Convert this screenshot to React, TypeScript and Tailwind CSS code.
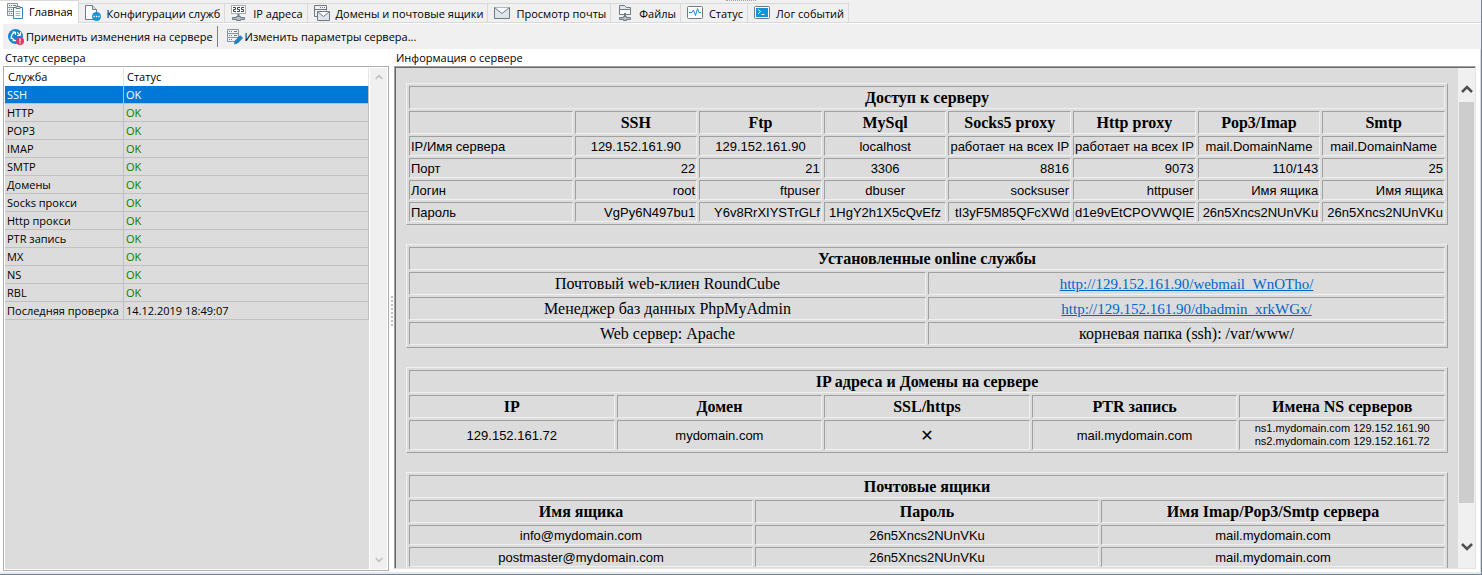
import type { ReactNode } from 'react'
import clsx from 'clsx'

const services = ['SSH', 'HTTP', 'POP3', 'IMAP', 'SMTP', 'Домены', 'Socks прокси', 'Http прокси', 'PTR запись', 'MX', 'NS', 'RBL']

const accessHeads = ['', 'SSH', 'Ftp', 'MySql', 'Socks5 proxy', 'Http proxy', 'Pop3/Imap', 'Smtp']

const accessRows = [
  ['IP/Имя сервера', '129.152.161.90', '129.152.161.90', 'localhost', 'работает на всех IP', 'работает на всех IP', 'mail.DomainName', 'mail.DomainName'],
  ['Порт', '22', '21', '3306', '8816', '9073', '110/143', '25'],
  ['Логин', 'root', 'ftpuser', 'dbuser', 'socksuser', 'httpuser', 'Имя ящика', 'Имя ящика'],
  ['Пароль', 'VgPy6N497bu1', 'Y6v8RrXIYSTrGLf', '1HgY2h1X5cQvEfz', 'tI3yF5M85QFcXWd', 'd1e9vEtCPOVWQIE', '26n5Xncs2NUnVKu', '26n5Xncs2NUnVKu'],
]

const mailboxes = [
  ['info@mydomain.com', '26n5Xncs2NUnVKu', 'mail.mydomain.com'],
  ['postmaster@mydomain.com', '26n5Xncs2NUnVKu', 'mail.mydomain.com'],
]

function Icon({ children }: { children: ReactNode }) {
  return (
    <svg className="w-4 h-4 shrink-0" viewBox="0 0 16 16" fill="none" stroke="#6f7b86" aria-hidden="true">
      {children}
    </svg>
  )
}

const HomeIcon = () => (
  <Icon>
    <path d="M.5.5h10v12H.5zM.5 4.5h10M.5 8.5h6" fill="#eef0f2" stroke="#8a949c" />
    <path d="M2 2.5h1M4 2.5h1M6 2.5h3M2 6.5h1M4 6.5h1M2 10.5h1M4 10.5h1" />
    <path d="M6.5 4.5h9v11h-9z" fill="#fff" stroke="#2b87b8" />
    <path d="M9 3.5h4v2H9z" fill="#dfe5ea" />
    <path d="M8.5 8.5h5M8.5 10.5h5M8.5 12.5h5" stroke="#a9b4bc" />
  </Icon>
)

const ConfigIcon = () => (
  <Icon>
    <path d="M.5.5h7l4 4v10H.5z" fill="#fff" />
    <path d="M7.5.5v4h4" fill="#dfe5ea" />
    <circle cx="11.5" cy="11.5" r="4.5" fill="#1492d8" stroke="none" />
    <path d="M8.5 11.5h1.3M10.9 11.5h1.3M13.3 11.5h1.3" stroke="#fff" strokeWidth="1.3" />
  </Icon>
)

const IpIcon = () => (
  <Icon>
    <path d="M.5.5h14v8H.5z" fill="#fff" stroke="#a3acb3" />
    <path d="M2 2.5h2.5v2h-2v2H5M9 2.5H6.5v2h2v2H6M13 2.5h-2.5v2h2v2H10" stroke="#3c454c" />
    <path d="M7.5 9v2" strokeWidth="2" />
    <path d="M5.5 11.5h4v1h4v2h-4v1h-4v-1h-4v-2h4z" fill="#b8c0c6" />
  </Icon>
)

const DomainIcon = () => (
  <Icon>
    <path d="M3 11.5H.5V.5h12v5M.5 4.5h12" />
    <path d="M6 2.5h1M8 2.5h1M10 2.5h1" />
    <path d="M3.5 6.5h12v9h-12z" fill="#dfe5ea" />
    <path d="m4 7 5.5 4.5L15 7" fill="#fff" />
  </Icon>
)

const MailIcon = () => (
  <Icon>
    <path d="M.5 2.5h15v11H.5z" fill="#dfe5ea" />
    <path d="m.5 2.5 7.5 6 7.5-6" fill="#f7f9fa" />
  </Icon>
)

const FilesIcon = () => (
  <Icon>
    <path d="M2.5.5h5l2 2h4v7h-11z" fill="#dfe5ea" />
    <path d="M2.5 4.5h11v5h-11z" fill="#fff" />
    <path d="M8 8v4" strokeWidth="2" />
    <path d="M6.5 11.5h3v1h4v2h-4v1h-3v-1h-4v-2h4z" fill="#b8c0c6" />
  </Icon>
)

const StatusIcon = () => (
  <Icon>
    <rect x=".5" y="1.5" width="15" height="12" rx="1" fill="#fff" />
    <path d="M2 7.5h3L6.5 5l2 5.5 2-7 1.5 4h2" stroke="#1492d8" />
  </Icon>
)

const LogIcon = () => (
  <Icon>
    <rect x=".5" y="1.5" width="15" height="12" rx="1" fill="#fff" />
    <path d="M2 3h12v9H2z" fill="#1492d8" stroke="none" />
    <path d="m4 4.5 2.5 2L4 9M7.5 9.5h3" stroke="#fff" />
  </Icon>
)

const ApplyIcon = () => (
  <Icon>
    <circle cx="7.5" cy="7.5" r="7.5" fill="#1687cf" stroke="none" />
    <path d="M3.8 9.5A4.2 4.2 0 0 1 7 3.5M8.5 11.5A4.2 4.2 0 0 1 5 10.5M9 3.5a4.2 4.2 0 0 1 2.5 2.5" stroke="#fff" strokeWidth="1.3" />
    <path d="M4.5 3h3v3M2.5 9.5h2.7v3M12.5 3v3.5H9" stroke="#fff" />
    <circle cx="12" cy="12" r="4" fill="#d93a68" stroke="none" />
    <path d="M12 9.5v3M12 13.3v1.2" stroke="#fff" strokeWidth="1.2" />
  </Icon>
)

const EditIcon = () => (
  <Icon>
    <path d="M.5.5h11v12H.5zM.5 4.5h11M.5 8.5h11" fill="#eef0f2" stroke="#8a949c" />
    <path d="M2 2.5h1M4 2.5h1M7 2.5h3M2 6.5h1M4 6.5h1M7 6.5h3M2 10.5h1M4 10.5h1" />
    <path d="m7.5 15 .8-3.3 5-5 2.3 2.3-5 5z" fill="#1687cf" stroke="#1c6fa8" strokeWidth=".8" />
  </Icon>
)

const tabs = [
  { label: 'Главная', icon: <HomeIcon /> },
  { label: 'Конфигурации служб', icon: <ConfigIcon /> },
  { label: 'IP адреса', icon: <IpIcon /> },
  { label: 'Домены и почтовые ящики', icon: <DomainIcon /> },
  { label: 'Просмотр почты', icon: <MailIcon /> },
  { label: 'Файлы', icon: <FilesIcon /> },
  { label: 'Статус', icon: <StatusIcon /> },
  { label: 'Лог событий', icon: <LogIcon /> },
]

function Arrow({ up = false, className }: { up?: boolean; className: string }) {
  return (
    <svg className={className} viewBox="0 0 12 8" fill="none" stroke="currentColor" strokeWidth="2.5" aria-hidden="true">
      <path d={up ? 'm1 7 5-5 5 5' : 'm1 1 5 5 5-5'} />
    </svg>
  )
}

// Cells and frames use the classic bevel of border="1" tables
function InfoTable({ cols, children }: { cols: string[]; children: ReactNode }) {
  return (
    <table className="w-full table-fixed border-separate border-spacing-[2px] border border-t-[#f0f0f0] border-l-[#f0f0f0] border-b-[#a0a0a0] border-r-[#a0a0a0]">
      <colgroup>
        {cols.map((c, i) => (
          <col key={i} className={c} />
        ))}
      </colgroup>
      <tbody>{children}</tbody>
    </table>
  )
}

const cell = 'border border-t-[#a0a0a0] border-l-[#a0a0a0] border-b-[#f0f0f0] border-r-[#f0f0f0] px-px whitespace-nowrap'
const serif = 'font-["Liberation_Serif",serif] text-[16px] leading-[19px] py-px'
const sans = 'font-["Liberation_Sans",sans-serif] text-[13px] leading-4 pt-[2px] pb-0'
const link = 'text-[15px] leading-none text-[#0066cc] underline'

function Title({ span, children }: { span: number; children: ReactNode }) {
  return (
    <tr>
      <th colSpan={span} className={clsx(cell, serif)}>{children}</th>
    </tr>
  )
}

function Heads({ items }: { items: string[] }) {
  return (
    <tr>
      {items.map((h, i) => (
        <th key={i} className={clsx(cell, serif)}>{h || '\u00a0'}</th>
      ))}
    </tr>
  )
}

export default function App() {
  return (
    <div className='h-screen flex flex-col overflow-hidden bg-white text-black font-["Open_Sans","Noto_Sans",sans-serif] text-[11px] leading-4 border-r border-b border-[#6f8196]'>
      {/* Tabs */}
      <div className="relative flex h-[23px] shrink-0 items-end bg-[#f0f0f0] border-b border-[#d9d9d9]">
        <div className="absolute top-0 left-1/2 -translate-x-1/2 w-[30px] border-t border-dotted border-[#a0a0a0]" />
        {tabs.map((tab, i) => (
          <button
            key={tab.label}
            className={clsx(
              'flex items-center gap-[6px] whitespace-nowrap border-t border-r border-[#d9d9d9]',
              i === 0 ? 'h-[23px] -mb-px bg-white pl-[7px] pr-[5px] pb-[2px]' : 'h-[19px] pl-[6px] pr-1',
            )}
          >
            {tab.icon}
            <span className="pt-px">{tab.label}</span>
          </button>
        ))}
      </div>

      {/* Toolbar */}
      <div className="flex h-[25px] mt-px ml-[3px] shrink-0 items-center bg-[#f0f0f0]">
        <button className="flex items-center gap-[2px] pl-[5px] pr-1">
          <ApplyIcon />
          Применить изменения на сервере
        </button>
        <div className="w-px h-[21px] bg-[#808080]" />
        <button className="flex items-center gap-[2px] pl-[9px]">
          <EditIcon />
          Изменить параметры сервера...
        </button>
      </div>

      <div className="flex flex-1 min-h-0 pl-[3px] pr-1 border-r border-[#d9d9d9]">
        {/* Service status */}
        <section className="flex flex-col w-[386px] shrink-0 pb-px">
          <h2 className="h-[17px] pl-[2px] leading-[18px]">Статус сервера</h2>
          <div className="flex flex-1 min-h-0 border border-[#abadb3] p-px">
            <div className="flex-1 bg-[#dcdcdc]">
              <table className="w-full table-fixed border-separate border-spacing-0">
                <colgroup>
                  <col className="w-[119px]" />
                  <col />
                </colgroup>
                <thead className="bg-white">
                  <tr className="h-[18px] text-left">
                    <th className="p-0 pl-[3px] font-normal border-r border-[#e5e5e5]">Служба</th>
                    <th className="p-0 pl-[3px] font-normal border-r border-[#e5e5e5]">Статус</th>
                  </tr>
                </thead>
                <tbody>
                  {services.map((name, i) => (
                    <tr key={name} className={clsx('h-[18px]', i === 0 && 'bg-[#0078d7] text-white')}>
                      <td className="p-0 pl-[2px] border-r border-b border-[#c0c0c0]">{name}</td>
                      <td className={clsx('p-0 pl-[2px] border-r border-b border-[#c0c0c0]', i > 0 && 'text-[#008000]')}>OK</td>
                    </tr>
                  ))}
                  <tr className="h-[18px]">
                    <td className="p-0 pl-[2px] whitespace-nowrap border-r border-b border-[#c0c0c0]">Последняя проверка</td>
                    <td className="p-0 pl-[2px] border-r border-b border-[#c0c0c0]">14.12.2019 18:49:07</td>
                  </tr>
                </tbody>
              </table>
            </div>
            <div className="flex flex-col w-[18px] justify-between items-center border-l border-white bg-[#f0f0f0] text-[#c0c0c0] py-[6px]">
              <button className="block" aria-label="Вверх"><Arrow up className="w-2 h-[6px]" /></button>
              <button className="block" aria-label="Вниз"><Arrow className="w-2 h-[6px]" /></button>
            </div>
          </div>
        </section>

        {/* Splitter */}
        <div className="flex w-[5px] shrink-0 items-center justify-center">
          <div className="h-[30px] border-l-2 border-dotted border-[#c0c0c0]" />
        </div>

        {/* Server info */}
        <section className="flex flex-col flex-1 min-w-0 pb-[3px]">
          <h2 className="h-[17px] pl-[2px] leading-[18px]">Информация о сервере</h2>
          <div className="flex flex-1 min-h-0 border border-t-[#a0a0a0] border-l-[#a0a0a0] border-b-[#e3e3e3] border-r-[#e3e3e3]">
            <div className="flex flex-1 min-w-0 border-t border-l border-[#696969]">
              <div className="flex flex-col flex-1 min-w-0 gap-[19px] overflow-hidden bg-[#dcdcdc] px-[10px] pt-[15px]">
                <InfoTable cols={['w-[16%]', 'w-[12%]', 'w-[12%]', 'w-[12%]', 'w-[12%]', 'w-[12%]', 'w-[12%]', 'w-[12%]']}>
                  <Title span={8}>Доступ к серверу</Title>
                  <Heads items={accessHeads} />
                  {accessRows.map((row, r) => (
                    <tr key={row[0]}>
                      {row.map((value, c) => (
                        <td
                          key={c}
                          className={clsx(cell, sans, c === 0 ? 'text-left' : r === 0 || c === 3 ? 'text-center' : 'text-right')}
                        >
                          {value}
                        </td>
                      ))}
                    </tr>
                  ))}
                </InfoTable>

                <InfoTable cols={['w-1/2', 'w-1/2']}>
                  <Title span={2}>Установленные online службы</Title>
                  <tr className="text-center">
                    <td className={clsx(cell, serif)}>Почтовый web-клиен RoundCube</td>
                    <td className={clsx(cell, serif)}>
                      <a href="#webmail" className={link}>http://129.152.161.90/webmail_WnOTho/</a>
                    </td>
                  </tr>
                  <tr className="text-center">
                    <td className={clsx(cell, serif)}>Менеджер баз данных PhpMyAdmin</td>
                    <td className={clsx(cell, serif)}>
                      <a href="#dbadmin" className={link}>http://129.152.161.90/dbadmin_xrkWGx/</a>
                    </td>
                  </tr>
                  <tr className="text-center">
                    <td className={clsx(cell, serif)}>Web сервер: Apache</td>
                    <td className={clsx(cell, serif)}>корневая папка (ssh): /var/www/</td>
                  </tr>
                </InfoTable>

                <InfoTable cols={['w-1/5', 'w-1/5', 'w-1/5', 'w-1/5', 'w-1/5']}>
                  <Title span={5}>IP адреса и Домены на сервере</Title>
                  <Heads items={['IP', 'Домен', 'SSL/https', 'PTR запись', 'Имена NS серверов']} />
                  <tr className="text-center">
                    <td className={clsx(cell, sans)}>129.152.161.72</td>
                    <td className={clsx(cell, sans)}>mydomain.com</td>
                    <td className={clsx(cell, 'font-["DejaVu_Sans",sans-serif] text-[16px] leading-4 pt-[2px] font-bold')}>✕</td>
                    <td className={clsx(cell, sans)}>mail.mydomain.com</td>
                    <td className={clsx(cell, 'font-["Liberation_Sans",sans-serif] text-[11px] leading-[13px] py-px')}>
                      ns1.mydomain.com 129.152.161.90
                      <br />
                      ns2.mydomain.com 129.152.161.72
                    </td>
                  </tr>
                </InfoTable>

                <InfoTable cols={['w-1/3', 'w-1/3', 'w-1/3']}>
                  <Title span={3}>Почтовые ящики</Title>
                  <Heads items={['Имя ящика', 'Пароль', 'Имя Imap/Pop3/Smtp сервера']} />
                  {mailboxes.map((row) => (
                    <tr key={row[0]} className="text-center">
                      {row.map((value, i) => (
                        <td key={i} className={clsx(cell, sans)}>{value}</td>
                      ))}
                    </tr>
                  ))}
                </InfoTable>
              </div>

              <div className="flex flex-col w-[17px] shrink-0 items-center bg-[#f0f0f0] text-[#505050]">
                <button className="flex h-[34px] items-center pt-2" aria-label="Прокрутить вверх"><Arrow up className="w-3 h-2" /></button>
                <div className="flex-1 w-[15px] bg-[#cdcdcd]" />
                <button className="flex h-[65px] items-center pt-[22px]" aria-label="Прокрутить вниз"><Arrow className="w-3 h-2" /></button>
              </div>
            </div>
          </div>
        </section>
      </div>
      <div className="h-[2px] shrink-0 bg-[#e8e8e8]" />
    </div>
  )
}
